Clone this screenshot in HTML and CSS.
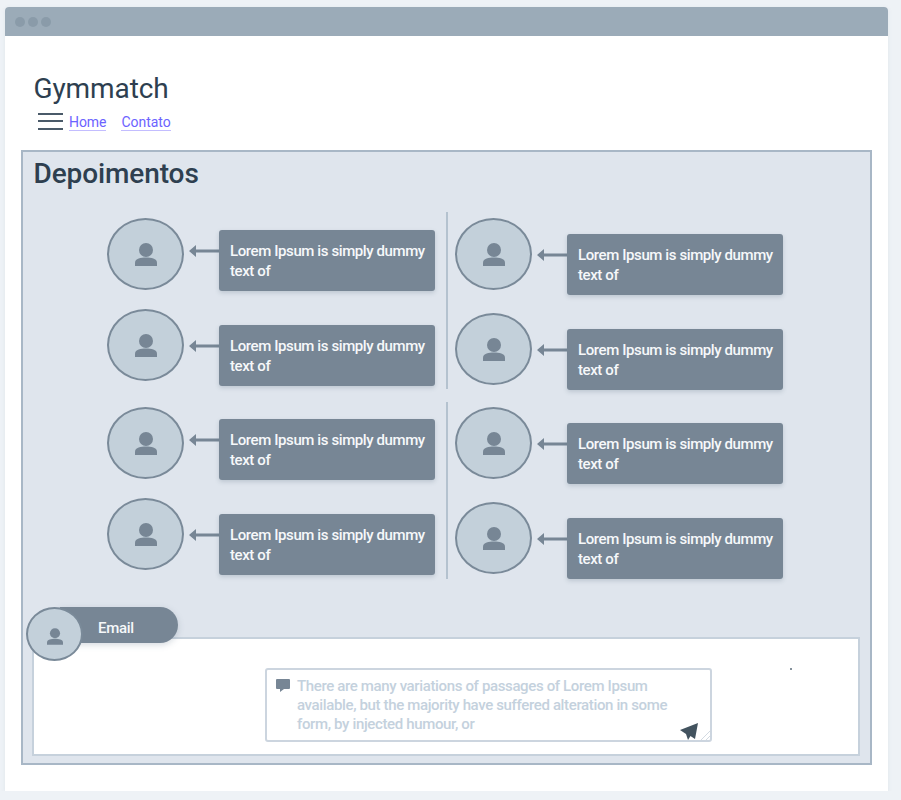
FILE: index.html
```html
<!DOCTYPE html>
<html lang="pt">
<head>
<meta charset="utf-8">
<title>Gymmatch</title>
<link rel="stylesheet" href="styles.css">
</head>
<body>
<svg class="sprites" width="0" height="0" aria-hidden="true">
  <symbol id="person" viewBox="0 0 22 23">
    <circle cx="11" cy="7" r="7"/>
    <path d="M0 23v-3.500C0 15.500 6 14.500 11 14.500s11 1 11 5V23z"/>
  </symbol>
  <symbol id="arrow" viewBox="0 0 30 14">
    <path d="M0 7 7 1v4.500h23v3H7V13z"/>
  </symbol>
</svg>
<div class="window">
  <div class="titlebar"><span class="dot"></span><span class="dot"></span><span class="dot"></span></div>
  <header class="header">
    <h1 class="brand">Gymmatch</h1>
    <nav class="nav">
      <span class="burger"><i></i><i></i><i></i></span>
      <a class="link" href="#">Home</a>
      <a class="link" href="#">Contato</a>
    </nav>
  </header>
  <main class="panel">
    <h2 class="title">Depoimentos</h2>
    <section class="grid">
      <div class="col col-left col-first">
        <div class="item item-high">
          <div class="avatar"><svg class="person"><use href="#person"/></svg></div>
          <div class="bubble"><svg class="arrow"><use href="#arrow"/></svg><p class="card">Lorem Ipsum is simply dummy text of</p></div>
        </div>
        <div class="item">
          <div class="avatar"><svg class="person"><use href="#person"/></svg></div>
          <div class="bubble"><svg class="arrow"><use href="#arrow"/></svg><p class="card">Lorem Ipsum is simply dummy text of</p></div>
        </div>
      </div>
      <div class="col col-right col-first">
        <div class="item">
          <div class="avatar"><svg class="person"><use href="#person"/></svg></div>
          <div class="bubble"><svg class="arrow"><use href="#arrow"/></svg><p class="card">Lorem Ipsum is simply dummy text of</p></div>
        </div>
        <div class="item">
          <div class="avatar"><svg class="person"><use href="#person"/></svg></div>
          <div class="bubble"><svg class="arrow"><use href="#arrow"/></svg><p class="card">Lorem Ipsum is simply dummy text of</p></div>
        </div>
      </div>
      <div class="col col-left">
        <div class="item item-high">
          <div class="avatar"><svg class="person"><use href="#person"/></svg></div>
          <div class="bubble"><svg class="arrow"><use href="#arrow"/></svg><p class="card">Lorem Ipsum is simply dummy text of</p></div>
        </div>
        <div class="item">
          <div class="avatar"><svg class="person"><use href="#person"/></svg></div>
          <div class="bubble"><svg class="arrow"><use href="#arrow"/></svg><p class="card">Lorem Ipsum is simply dummy text of</p></div>
        </div>
      </div>
      <div class="col col-right">
        <div class="item">
          <div class="avatar"><svg class="person"><use href="#person"/></svg></div>
          <div class="bubble"><svg class="arrow"><use href="#arrow"/></svg><p class="card">Lorem Ipsum is simply dummy text of</p></div>
        </div>
        <div class="item">
          <div class="avatar"><svg class="person"><use href="#person"/></svg></div>
          <div class="bubble"><svg class="arrow"><use href="#arrow"/></svg><p class="card">Lorem Ipsum is simply dummy text of</p></div>
        </div>
      </div>
    </section>
    <section class="form">
      <div class="tab">
        <span class="tab-avatar"><svg class="tab-person"><use href="#person"/></svg></span>
        <span class="tab-label">Email</span>
      </div>
      <span class="speck"></span>
      <div class="field">
        <textarea class="message" rows="3">There are many variations of passages of Lorem Ipsum available, but the majority have suffered alteration in some form, by injected humour, or</textarea>
        <svg class="bubble-icon" viewBox="0 0 14 13"><path d="M1 0h12a1 1 0 0 1 1 1v8a1 1 0 0 1-1 1H8l-4 3v-3H1a1 1 0 0 1-1-1V1a1 1 0 0 1 1-1z"/></svg>
        <svg class="send-icon" viewBox="0 0 18 18"><path d="M18 0 0 7l6 4 2 6 2.500-4 4.500 3z"/></svg>
      </div>
    </section>
  </main>
</div>
</body>
</html>
```

FILE: styles.css
```css
* { box-sizing: border-box; }

html, body { margin: 0; padding: 0; }

body {
  background: #eef2f6;
  font-family: Roboto, "Liberation Sans", sans-serif;
  color: #2e3f50;
}

.sprites { position: absolute; }

.window {
  margin: 7px 13px 0 5px;
  height: 784px;
  background: #fff;
  border-radius: 4px 4px 0 0;
  box-shadow: 0 1px 4px rgba(120, 140, 160, 0.12);
}

.titlebar {
  height: 29px;
  background: #9babb8;
  border-radius: 4px 4px 0 0;
  display: flex;
  align-items: center;
  gap: 3px;
  padding-left: 10px;
}

.dot {
  width: 10px;
  height: 10px;
  border-radius: 50%;
  background: #8a9ba9;
}

.header {
  padding: 36px 0 0 28.5px;
  height: 114px;
}

.brand {
  margin: 0;
  font-size: 28px;
  line-height: 34px;
  font-weight: 400;
  letter-spacing: -0.1px;
}

.nav {
  display: flex;
  align-items: center;
  gap: 16px;
  height: 20px;
  margin: 6px 0 0 4.5px;
  font-size: 14px;
}

.burger {
  display: flex;
  flex-direction: column;
  justify-content: space-between;
  width: 25px;
  height: 17px;
  margin-right: -10px;
  transform: translateY(-1px);
}

.burger i {
  display: block;
  height: 2px;
  background: #4a5a69;
}

.link {
  color: #6c63ff;
  text-decoration: none;
  border-bottom: 1px solid #c3bdff;
  line-height: 16px;
  letter-spacing: -0.05px;
}

.link + .link { margin-left: -1px; }

.panel {
  margin: 0 16px;
  height: 615px;
  background: #dfe5ed;
  border: 2px solid #a8b7c6;
}

.title {
  margin: 0;
  padding: 5px 0 0 10.5px;
  height: 60px;
  font-size: 28px;
  line-height: 34px;
  font-weight: 500;
  letter-spacing: -0.1px;
}

.grid {
  display: grid;
  grid-template-columns: 423px 1fr;
  row-gap: 13px;
}

.col {
  height: 177px;
  padding-top: 6px;
  display: flex;
  flex-direction: column;
  gap: 19px;
}

.col-first { padding-top: 7px; }

.col-left {
  align-items: flex-end;
  padding-right: 11px;
}

.col-right {
  border-left: 2px solid #b4c2cf;
  padding-left: 7px;
}

.item {
  display: flex;
  align-items: flex-start;
}

.avatar {
  flex: none;
  width: 77px;
  height: 72px;
  margin-top: -1px;
  border: 2px solid #7a8a99;
  border-radius: 50%;
  background: #c3d0da;
  display: flex;
  align-items: center;
  justify-content: center;
}

.person {
  width: 22px;
  height: 23px;
  fill: #778695;
}

.bubble {
  display: flex;
  align-items: flex-start;
  margin: 15px 0 0 5px;
}

.item-high .bubble { margin-top: 11px; }

.arrow {
  flex: none;
  width: 30px;
  height: 14px;
  margin-top: 14px;
  fill: #778695;
}

.card {
  margin: 0;
  width: 216px;
  height: 61px;
  padding: 11px 6px 0 11px;
  background: #778695;
  border-radius: 3px;
  box-shadow: 0 2px 4px rgba(90, 110, 130, 0.25);
  color: #f6f8fa;
  font-size: 15px;
  font-weight: 500;
  line-height: 20px;
  letter-spacing: -0.4px;
}

.form {
  position: relative;
  margin: 58px 10px 0 9px;
  height: 119px;
  background: #fff;
  border: 2px solid #c6d1dc;
}

.tab {
  position: absolute;
  left: -8px;
  top: -32px;
  display: flex;
  align-items: flex-start;
}

.tab-avatar {
  position: relative;
  z-index: 1;
  flex: none;
  width: 57px;
  height: 54px;
  border: 2px solid #7a8a99;
  border-radius: 50%;
  background: #c3d0da;
  display: flex;
  align-items: center;
  justify-content: center;
  padding-top: 4px;
}

.tab-person {
  width: 16px;
  height: 17px;
  fill: #778695;
}

.tab-label {
  margin-left: -23px;
  width: 118px;
  height: 36px;
  padding-left: 38px;
  background: #778695;
  border-radius: 0 18px 18px 0;
  box-shadow: 0 2px 6px rgba(90, 110, 130, 0.25);
  color: #f6f8fa;
  font-size: 15px;
  font-weight: 500;
  line-height: 43px;
  letter-spacing: -0.3px;
}

.speck {
  position: absolute;
  left: 756px;
  top: 29px;
  width: 2px;
  height: 2px;
  border-radius: 50%;
  background: #5d6c7a;
}

.field {
  position: absolute;
  left: 231px;
  top: 29px;
  width: 447px;
  height: 74px;
}

.message {
  display: block;
  width: 100%;
  height: 100%;
  padding: 7px 8px 0 30px;
  border: 2px solid #ccd5df;
  border-radius: 3px;
  background: #fff;
  color: #c4d1dd;
  font-family: Roboto, "Liberation Sans", sans-serif;
  font-size: 15px;
  font-weight: 500;
  line-height: 19px;
  letter-spacing: -0.36px;
  overflow: hidden;
  outline: none;
}

.message::-webkit-resizer {
  background: linear-gradient(135deg, transparent 68%, #d3dae2 68%, #d3dae2 73%, transparent 73%, transparent 84%, #d3dae2 84%, #d3dae2 89%, transparent 89%);
}

.bubble-icon {
  position: absolute;
  left: 11px;
  top: 11px;
  width: 14px;
  height: 13px;
  fill: #778695;
}

.send-icon {
  position: absolute;
  left: 415px;
  top: 55px;
  width: 18px;
  height: 18px;
  fill: #43535f;
}
```
